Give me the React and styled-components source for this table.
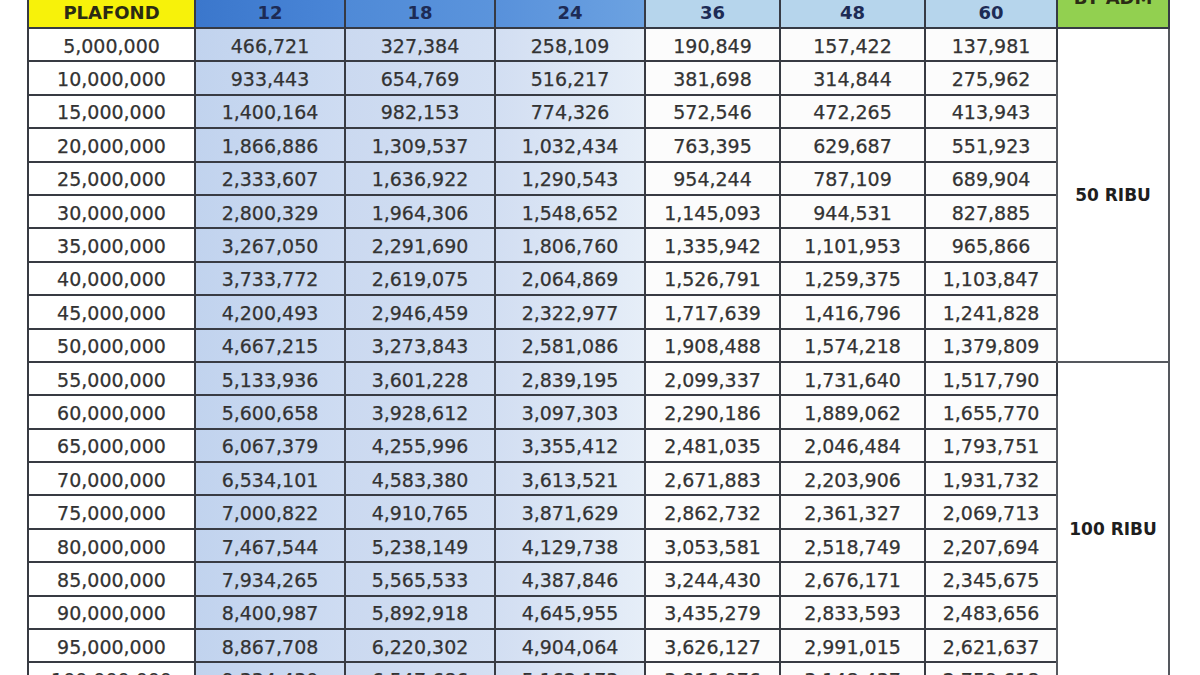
import React from "react";
import styled, { createGlobalStyle } from "styled-components";

const GlobalStyle = createGlobalStyle`
  html, body {
    margin: 0;
    padding: 0;
    background: #ffffff;
  }
  body {
    font-family: "DejaVu Sans", "Liberation Sans", sans-serif;
  }
`;

const Page = styled.div`
  width: 1200px;
  height: 675px;
  overflow: hidden;
  background: #ffffff;
  padding-left: 27px;
  box-sizing: border-box;
`;

const Sheet = styled.table`
  margin-top: -41px;
  width: 1141px;
  table-layout: fixed;
  border-collapse: collapse;
  color: #333333;
  font-size: 19px;
  -webkit-text-stroke: 0.25px #333333;
`;

const headTones = {
  yellow: "#f7f20a",
  blue1: "linear-gradient(90deg, #3b77cc 0%, #4a86d7 100%)",
  blue2: "linear-gradient(90deg, #4f8ad7 0%, #5b94dc 100%)",
  blue3: "linear-gradient(90deg, #5891db 0%, #6ca2e1 100%)",
  sky: "#b6d5ec",
  green: "#92d050",
};

const HeadCell = styled.th`
  height: ${(p) => (p.$tall ? "36px" : "28px")};
  padding: ${(p) => (p.$tone === "green" ? "7px 0 0" : "0")};
  border: 2px solid #363a44;
  background: ${(p) => headTones[p.$tone]};
  color: ${(p) => (p.$tone === "yellow" || p.$tone === "green" ? "#2b2b14" : "#1d2b55")};
  -webkit-text-stroke: 0;
  font-size: 18px;
  font-weight: bold;
  text-align: center;
  vertical-align: middle;
  line-height: 22px;
`;

const bodyTones = [
  "#ffffff",
  "linear-gradient(90deg, #c1d3ee 0%, #cedcf2 100%)",
  "linear-gradient(90deg, #cbd9f0 0%, #d4e0f3 100%)",
  "linear-gradient(90deg, #d2def2 0%, #e6eef8 100%)",
  "#fcfcfc",
  "#fcfcfc",
  "#fcfcfc",
];

const Row = styled.tr`
  height: 33.4px;
`;

const Cell = styled.td`
  padding: 2px 0 0;
  border: 2px solid #383b43;
  background: ${(p) => bodyTones[p.$col]};
  text-align: center;
  vertical-align: middle;
  white-space: nowrap;
`;

const FeeCell = styled.td`
  padding: 0;
  border: 2px solid #55585e;
  background: #ffffff;
  color: #1e1e1e;
  -webkit-text-stroke: 0;
  font-size: 17px;
  font-weight: bold;
  text-align: center;
  vertical-align: middle;
`;

const tenors = ["12", "18", "24", "36", "48", "60"];
const tones = ["blue1", "blue2", "blue3", "sky", "sky", "sky"];
const widths = [167, 150, 150, 150, 135, 145, 132, 112];

const rows = [
  ["5,000,000", "466,721", "327,384", "258,109", "190,849", "157,422", "137,981"],
  ["10,000,000", "933,443", "654,769", "516,217", "381,698", "314,844", "275,962"],
  ["15,000,000", "1,400,164", "982,153", "774,326", "572,546", "472,265", "413,943"],
  ["20,000,000", "1,866,886", "1,309,537", "1,032,434", "763,395", "629,687", "551,923"],
  ["25,000,000", "2,333,607", "1,636,922", "1,290,543", "954,244", "787,109", "689,904"],
  ["30,000,000", "2,800,329", "1,964,306", "1,548,652", "1,145,093", "944,531", "827,885"],
  ["35,000,000", "3,267,050", "2,291,690", "1,806,760", "1,335,942", "1,101,953", "965,866"],
  ["40,000,000", "3,733,772", "2,619,075", "2,064,869", "1,526,791", "1,259,375", "1,103,847"],
  ["45,000,000", "4,200,493", "2,946,459", "2,322,977", "1,717,639", "1,416,796", "1,241,828"],
  ["50,000,000", "4,667,215", "3,273,843", "2,581,086", "1,908,488", "1,574,218", "1,379,809"],
  ["55,000,000", "5,133,936", "3,601,228", "2,839,195", "2,099,337", "1,731,640", "1,517,790"],
  ["60,000,000", "5,600,658", "3,928,612", "3,097,303", "2,290,186", "1,889,062", "1,655,770"],
  ["65,000,000", "6,067,379", "4,255,996", "3,355,412", "2,481,035", "2,046,484", "1,793,751"],
  ["70,000,000", "6,534,101", "4,583,380", "3,613,521", "2,671,883", "2,203,906", "1,931,732"],
  ["75,000,000", "7,000,822", "4,910,765", "3,871,629", "2,862,732", "2,361,327", "2,069,713"],
  ["80,000,000", "7,467,544", "5,238,149", "4,129,738", "3,053,581", "2,518,749", "2,207,694"],
  ["85,000,000", "7,934,265", "5,565,533", "4,387,846", "3,244,430", "2,676,171", "2,345,675"],
  ["90,000,000", "8,400,987", "5,892,918", "4,645,955", "3,435,279", "2,833,593", "2,483,656"],
  ["95,000,000", "8,867,708", "6,220,302", "4,904,064", "3,626,127", "2,991,015", "2,621,637"],
  ["100,000,000", "9,334,430", "6,547,686", "5,162,173", "3,816,976", "3,148,437", "2,759,618"],
];

const fees = { 0: "50 RIBU", 10: "100 RIBU" };

export default function App() {
  return (
    <>
      <GlobalStyle />
      <Page>
        <Sheet>
          <colgroup>
            {widths.map((w, i) => (
              <col key={i} style={{ width: w }} />
            ))}
          </colgroup>
          <thead>
            <tr>
              <HeadCell $tone="yellow" $tall />
              <HeadCell $tone="blue2" $tall colSpan={6}>
                JANGKA WAKTU (BULAN)
              </HeadCell>
              <HeadCell $tone="green" rowSpan={2}>
                BY ADM
              </HeadCell>
            </tr>
            <tr>
              <HeadCell $tone="yellow">PLAFOND</HeadCell>
              {tenors.map((t, i) => (
                <HeadCell key={t} $tone={tones[i]}>
                  {t}
                </HeadCell>
              ))}
            </tr>
          </thead>
          <tbody>
            {rows.map((r, ri) => (
              <Row key={r[0]}>
                {r.map((v, ci) => (
                  <Cell key={ci} $col={ci}>
                    {v}
                  </Cell>
                ))}
                {fees[ri] && <FeeCell rowSpan={10}>{fees[ri]}</FeeCell>}
              </Row>
            ))}
          </tbody>
        </Sheet>
      </Page>
    </>
  );
}
